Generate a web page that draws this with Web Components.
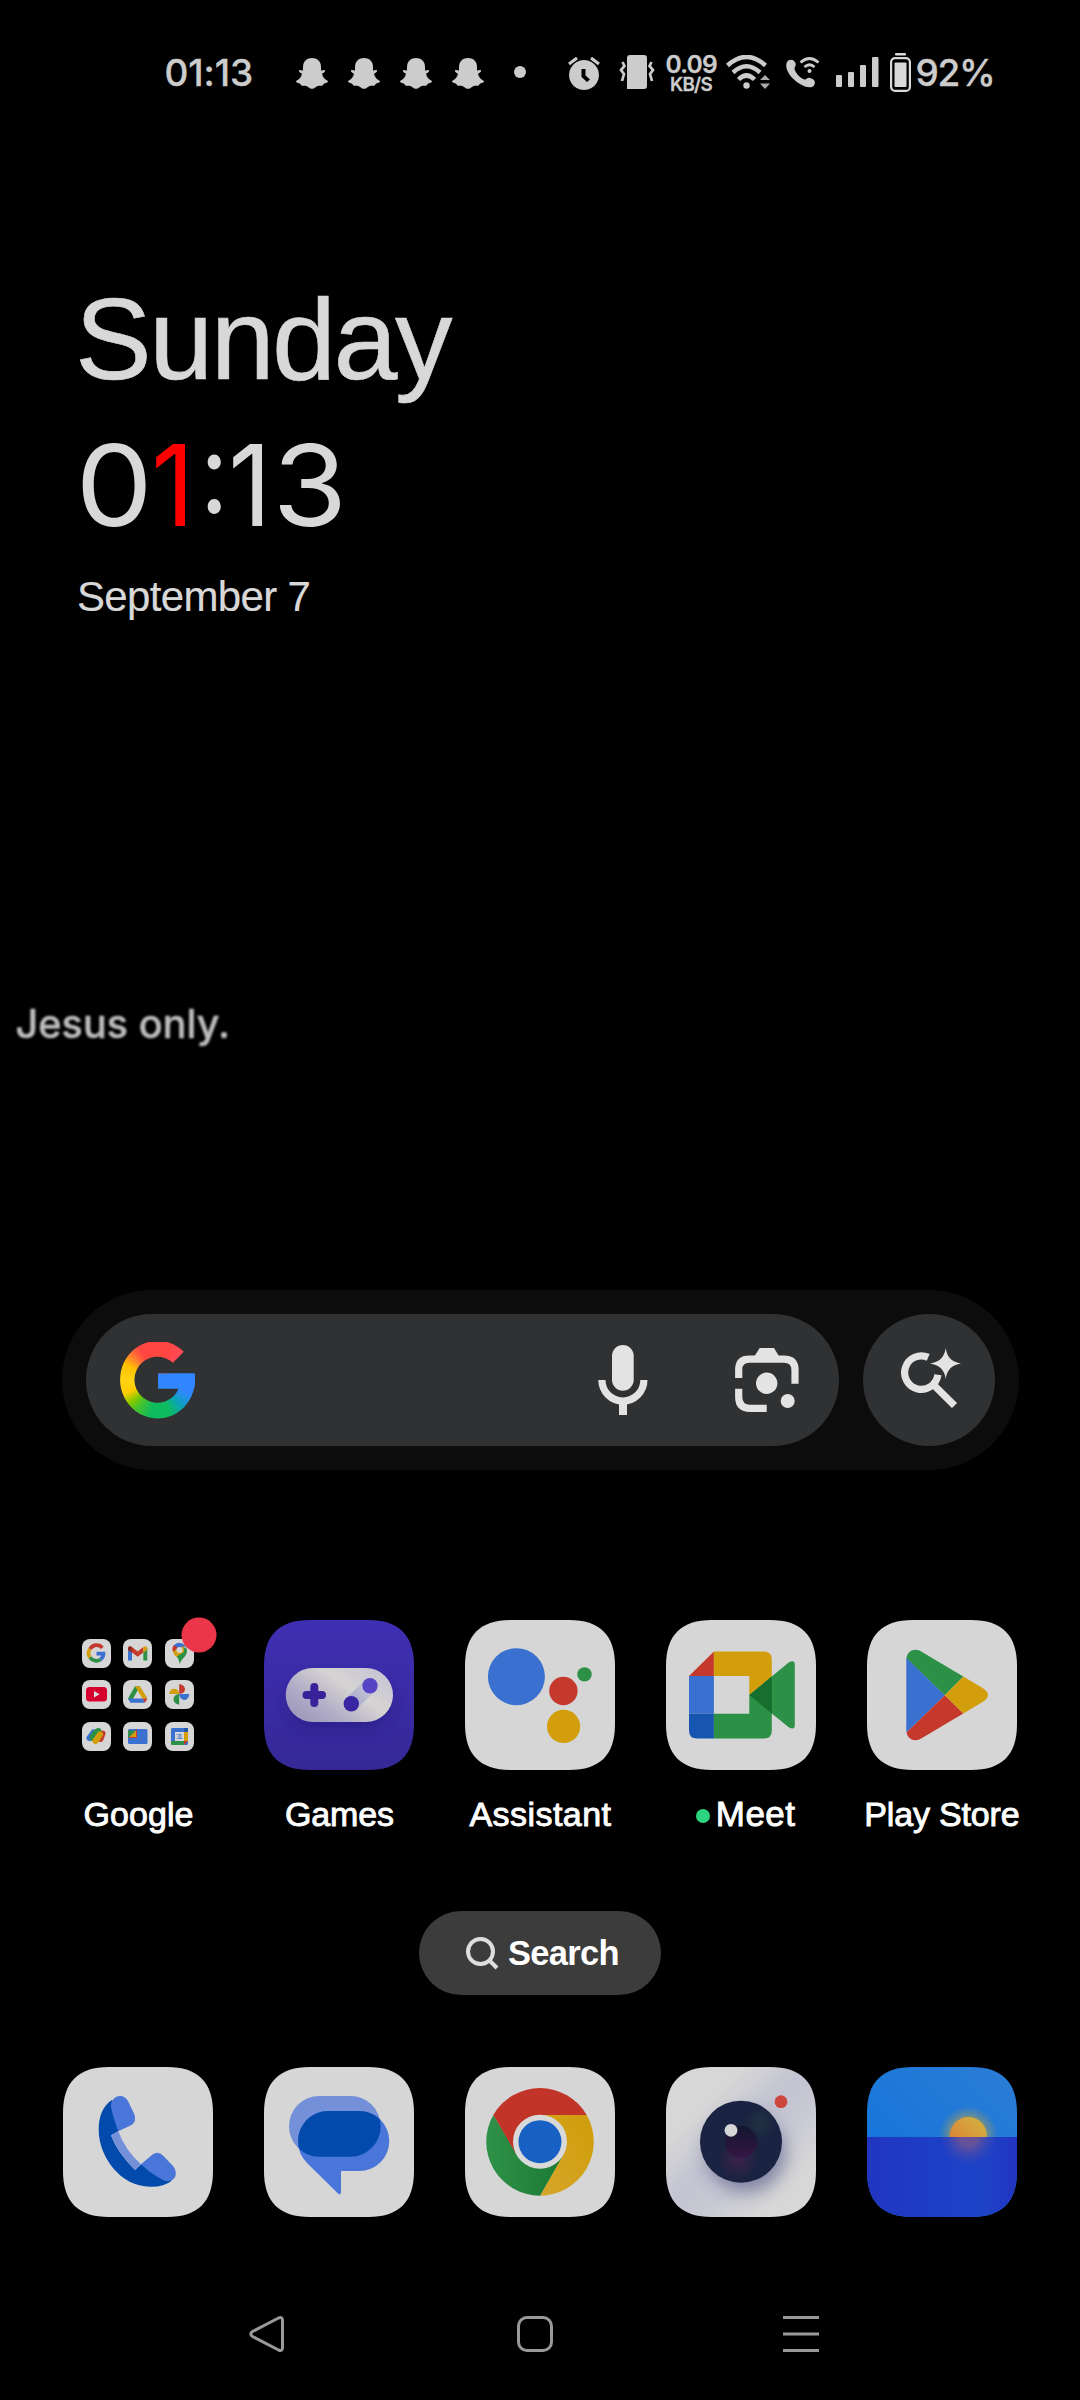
<!DOCTYPE html>
<html lang="en">
<head>
<meta charset="utf-8">
<title>Home screen</title>
<style>
html,body{margin:0;background:#000}
body{width:1080px;height:2400px;overflow:hidden}
</style>
</head>
<body>
<home-screen></home-screen>
<script>
const define=(name,html,extra)=>customElements.define(name,class extends HTMLElement{
  constructor(){super();this.attachShadow({mode:'open'}).innerHTML=html}
  connectedCallback(){if(extra)extra(this)}
});

/* Text whose box is its ink width by its cap height. */
const ctx=document.createElement('canvas').getContext('2d');
customElements.define('fit-text',class extends HTMLElement{
  connectedCallback(){
    if(this.shadowRoot)return;
    const g=(k,d)=>this.getAttribute(k)||d;
    const text=this.textContent,size=g('size'),weight=g('weight','400'),family=g('family','Liberation Sans');
    const w=+g('w'),h=+g('h');
    ctx.font=`${weight} ${size}px "${family}", sans-serif`;
    const m=ctx.measureText(text);
    const ink=m.actualBoundingBoxRight+m.actualBoundingBoxLeft;
    const ls=text.length>1?(w-ink)/(text.length-1):0;
    const scale=text.length>1?1:w/ink;
    const top=h/2-(m.fontBoundingBoxAscent-m.fontBoundingBoxDescent)/2;
    this.attachShadow({mode:'open'}).innerHTML=`<style>
      :host{display:flow-root;flex:none;width:${w}px;height:${h}px}
      span{display:block;width:max-content;white-space:pre;font:${weight} ${size}px/${h}px "${family}",sans-serif;
      letter-spacing:${ls}px;margin:${top}px 0 0 ${m.actualBoundingBoxLeft}px;
      transform:${scale===1?'none':`scaleX(${scale})`};transform-origin:${-m.actualBoundingBoxLeft}px 0;
      -webkit-text-stroke:${g('stroke','0')}px currentColor}
      </style><span><slot></slot></span>`;
  }
});

/* Status bar */
const snap=`<svg width="32" height="31" viewBox="0 0 32 31"><path d="M16 0c6 0 9 4 9 9v3.500c1.500.3 2.500-.8 3.700-.2 1.200.7-.2 2-2.700 3.400.8 3.600 3 6 6 7.200.2 1.700-2.300 2.300-4.300 2.800-.3 1.200-.8 2-2.200 2-2 0-3.500-.3-5.200 1-1.600 1.200-2.800 2.100-4.300 2.100s-2.700-.9-4.300-2.100c-1.700-1.300-3.200-1-5.200-1-1.400 0-1.900-.8-2.200-2C2.300 25.200-.2 24.600 0 22.900c3-1.200 5.200-3.600 6-7.200-2.500-1.400-3.900-2.700-2.700-3.400C4.500 11.700 5.500 12.800 7 12.500V9c0-5 3-9 9-9z"/></svg>`;
define('status-bar',`<style>
:host{display:flex;align-items:center;height:144px;padding-left:166.500px;box-sizing:border-box;color:#ccc}
svg{display:block;fill:#ccc;flex:none}
.snaps{display:flex;gap:20px;margin:3px 0 0 44px}
.dot{width:12px;height:12px;border-radius:50%;background:#ccc;margin-left:30px}
.rate{display:flex;flex-direction:column;gap:3.500px;align-items:center;margin:3px 0 0 12px}
</style>
<fit-text size="37" family="Inter" weight="500" stroke=".3" w="85.500" h="27">01:13</fit-text>
<div class="snaps">${snap.repeat(4)}</div><div class="dot"></div>
<svg style="margin:1px 0 0 42px" width="32" height="34" viewBox="0 0 32 34"><path fill-rule="evenodd" d="M16 4a15 15 0 1 0 .01 0zM13.500 13h4v6.500l4.500 4-3 2.500-5.500-5z"/><path d="M1 8L9 2M31 8L23 2" stroke="#ccc" stroke-width="3.200"/></svg>
<svg style="margin-left:18.500px" width="36" height="34" viewBox="0 0 36 34"><path d="M11 0H25a3 3 0 0 1 3 3V31a3 3 0 0 1-3 3H8V3a3 3 0 0 1 3-3z"/><path d="M3.500 7L5.500 11 2 15 5 19 3 26M32.500 7l-2 4 3.500 4-3 4 2 7" fill="none" stroke="#ccc" stroke-width="2.700"/></svg>
<div class="rate"><fit-text size="24.500" family="Inter" weight="600" stroke=".3" w="50.500" h="17.500">0.09</fit-text><fit-text size="18.800" family="Inter" weight="600" stroke=".3" w="41.500" h="13.500">KB/S</fit-text></div>
<svg style="margin-left:9px" width="45" height="34" viewBox="0 0 45 34"><circle cx="20.500" cy="30.500" r="3.200"/><path d="M1.500 10.500Q20.500-6.500 39.500 10.500M7 17.500Q20.500 5 34 17.500M12.500 24.500Q20.500 16.500 28.500 24.500" fill="none" stroke="#ccc" stroke-width="4.500"/><path d="M34 25l5-5 5 5zM34 28.500l5 5.500 5-5.500z" fill="#aaa"/></svg>
<svg style="margin-left:15px" width="34" height="31" viewBox="0 0 34 31"><path d="M1 5C3 1.500 8 2 9.500 6c1 3-1.500 4.500-1 6 1.500 4.500 5 8.500 10 10.500 2 .5 2.500-2.500 5.500-1.500 4.500 1 6 4 4 7.500-3 3.500-9 1.500-14-1.500C6.500 22.500 1.500 16.500.3 10Q0 7 1 5z"/><circle cx="23.500" cy="14" r="2"/><path d="M14.500 5.500q9-8 18 0M18.500 10q5-4.500 10 0" fill="none" stroke="#ccc" stroke-width="2.800"/></svg>
<svg style="margin-left:16px" width="43" height="30" viewBox="0 0 43 30"><rect y="18" width="6" height="12" rx="1"/><rect x="12" y="15" width="6" height="15" rx="1"/><rect x="24" y="8" width="6" height="22" rx="1"/><rect x="36" width="6.500" height="30" rx="1"/></svg>
<svg style="margin-left:10.500px" width="21" height="39" viewBox="0 0 21 39"><g fill="#dadada"><rect x="5" width="11" height="2.500" rx="1"/><rect x="1.100" y="5.100" width="18.800" height="32.800" rx="4" fill="none" stroke="#dadada" stroke-width="2.200"/><rect x="4.500" y="9.500" width="12" height="24.500" rx="1"/></g></svg>
<fit-text style="margin-left:7px" size="37" family="Inter" weight="500" stroke=".3" w="74.500" h="27">92%</fit-text>`);

/* Clock widget */
define('clock-widget',`<style>
:host{display:flex;flex-direction:column;padding:153px 0 0 78px;height:898px;box-sizing:border-box;color:#d8d8d8}
.t{display:flex;margin:65px 0 0 4px}.r{color:#f00}
</style>
<fit-text style="margin-left:2px" size="115" stroke=".6" w="373" h="82">Sunday</fit-text>
<div class="t"><fit-text size="113" family="Inter" w="64" h="82">0</fit-text><fit-text class="r" style="margin-left:10px" size="113" family="Inter" w="30" h="82">1</fit-text><fit-text style="margin-left:21px" size="113" family="Inter" w="14" h="69">:</fit-text><fit-text style="margin-left:12px" size="113" family="Inter" w="30" h="82">1</fit-text><fit-text style="margin-left:16px" size="113" family="Inter" w="62" h="82">3</fit-text></div>
<fit-text style="margin-top:56px" size="42" stroke=".2" w="231.500" h="29">September 7</fit-text>`);

define('wallpaper-caption',`<style>:host{display:flex;align-items:flex-end;height:248px;margin-top:-248px;padding:0 0 0 16.500px;color:#bcbcbc;filter:blur(1px)}
:host{margin-top:0;box-sizing:border-box;align-items:flex-start}fit-text{transform:translateY(-33px)}</style>
<fit-text size="39.500" family="Inter" weight="500" stroke=".5" w="210.500" h="29">Jesus only.</fit-text>`);

/* Search widget */
define('google-g',`<style>:host{display:block;width:78px;height:78px;margin-top:1px}
div{width:78px;height:78px;clip-path:path("M64.700 10.300L54 21.300A23 23 0 1 0 59.700 47H39V32H75.600A37.500 38.800 0 1 1 64.700 10.300Z");
background:linear-gradient(#3186ff,#3186ff) 38px 31px/40px 16px no-repeat,conic-gradient(at 39px 39px,#ff4641 15deg,#ff4a5a 42deg,#3186ff 70deg,#3186ff 112deg,#0aa5b5 138deg,#0ebc5f 160deg,#0ebc5f 192deg,#45c32c 217deg,#7ac800 230deg,#ffcc00 250deg,#ffd314 272deg,#ffc000 297deg,#ff8030 313deg,#ff4641 330deg)}</style><div></div>`);
define('search-widget',`<style>
:host{display:flex;gap:24px;margin:0 61px 0 62px;padding:24px;height:132px;background:#0c0c0c;border-radius:90px}
.bar{display:flex;align-items:center;width:753px;box-sizing:border-box;background:#303133;border-radius:66px;padding-left:33px}
.ai{display:flex;align-items:center;justify-content:center;width:132px;background:#303133;border-radius:50%}
svg{display:block;fill:#e3e3e3}.l{fill:none;stroke:#e3e3e3;stroke-width:7.200}
</style><div class="bar"><google-g></google-g>
<svg style="margin-left:401px" width="50" height="70" viewBox="0 0 50 70"><rect x="14" width="21.700" height="45.700" rx="10.850"/><path class="l" d="M3.900 35A21 21 0 0 0 45.900 35"/><rect x="21" y="59" width="8" height="11"/></svg>
<svg style="margin-left:87px" width="64" height="64" viewBox="0 0 64 64"><path class="l" d="M3.700 30V21.500Q3.700 11.200 14.500 11.200H49Q60 11.200 60 22V35.700M3.700 40.700V49Q3.700 60.300 15 60.300H31.700"/><path d="M19 9L24.700 0H39L44.500 9z"/><circle cx="31.700" cy="35.300" r="10.700"/><circle cx="52.700" cy="53" r="7"/></svg>
</div><div class="ai"><svg style="margin:-4px 0 0 4px" width="60" height="60" viewBox="0 0 60 60"><path class="l" d="M27.200 9.400A16.700 16.700 0 1 0 36.900 26.800M32.500 36.700L53.500 57.500"/><path d="M44.700 0Q46.500 13.700 60 15.500 46.500 17.300 44.700 31 42.900 17.300 29 15.500 42.900 13.700 44.700 0z"/></svg></div>`);

/* App icons, each on a 150-unit tile */
const tile='M0 46C0 15 15 0 46 0H104C135 0 150 15 150 46V104C150 135 135 150 104 150H46C15 150 0 135 0 104Z';
const B='#3a70cf',R='#c5392d',G='#2d9047',Y='#d29e0b';
const mini=(x,y,s)=>`<g transform="translate(${x} ${y})"><rect width="29" height="29" rx="8" fill="#d6d6d6"/>${s}</g>`;
const art={
google:mini(19,19,`<g fill="none" stroke-width="3.700"><path stroke="${R}" d="M20.300 8.800A7.400 7.400 0 0 0 8 10"/><path stroke="${Y}" d="M8 10A7.400 7.400 0 0 0 8 18.500"/><path stroke="${G}" d="M8 18.500A7.400 7.400 0 0 0 18.500 20.400"/><path stroke="${B}" d="M18.500 20.400A7.400 7.400 0 0 0 21.500 14.700H14.500"/></g>`)
+mini(60,19,`<path fill="${B}" d="M5 9V21.500H9V12z"/><path fill="${G}" d="M24.300 9V21.500H20.300V12z"/><path fill="${R}" d="M5 10Q5 6 9 8L14.700 12.500 20.300 8V13.500L14.700 17.700 9 13.500 5 11z"/><path fill="#8f2922" d="M5 10Q5 6 9 8V13.500L5 11z"/><path fill="${Y}" d="M20.300 8Q24.300 6 24.300 10V11L20.300 13.700z"/>`)
+mini(102,19,`<path fill="${G}" d="M14.500 25Q14 19 10 16L21 8Q24 14 18 19.500 15.500 22 14.500 25z"/><path fill="${B}" d="M9 6Q15 1 20.500 7L14.500 14 9 9z"/><path fill="${R}" d="M9 6L13 9 8.500 13.500Q6 9.500 9 6z"/><path fill="${Y}" d="M8 12.500L18.500 7 19 13 11 18Q8.500 15.500 8 12.500z"/><circle cx="14.500" cy="11" r="3" fill="#d6d6d6"/>`)
+mini(19,60,`<rect x="4" y="7" width="21" height="14.500" rx="3.500" fill="#d5002d"/><path fill="#ddd" d="M12 11V17.500L17.500 14.200z"/>`)
+mini(60,60,`<path fill="${G}" d="M12 6.300H17L9.500 19.500 7.500 22.500 5 18.500z"/><path fill="${Y}" d="M12 6.300H17L24.500 18.500H19.500z"/><path fill="${B}" d="M5 18.500H19.500L22 22.700H7.500z"/><path fill="${R}" d="M19.500 18.500H24.500L22 22.700z"/>`)
+mini(102,60,`<path fill="${R}" d="M14.200 4Q20 5 20 9.500 19.500 13.500 14.200 14z"/><path fill="${B}" d="M24.300 14Q23.500 20 19 20 14.500 19 14.200 14z"/><path fill="${G}" d="M14.200 24.700Q8.500 23.500 8.500 19 9 14.500 14.200 14z"/><path fill="${Y}" d="M4 14Q5 8.800 9.500 8.800 14 9.500 14.200 14z"/>`)
+mini(19,102,`<g fill="none" stroke-linecap="round" stroke-width="6"><path stroke="${R}" d="M20.500 11.500L18.500 17"/><path stroke="${B}" d="M11.500 10.500L7.500 16"/><path stroke="${G}" d="M16.500 9Q13 10 10.500 16"/><path stroke="${Y}" d="M18 12.500L13.500 19"/></g>`)
+mini(60,102,`<rect x="5" y="7" width="19.500" height="15" rx="1.500" fill="${B}"/><path fill="${R}" d="M14 7V16H5z"/><path fill="${G}" d="M5 8.500H13L5 16z"/><path fill="${Y}" d="M13 8.500V15H6.500z"/>`)
+mini(102,102,`<rect x="6" y="6" width="17" height="17" rx="1.500" fill="${B}"/><path fill="#2358aa" d="M19 6H23V10H19z"/><path fill="${Y}" d="M19 10H23V19H19z"/><path fill="${G}" d="M6 19H19V23H7.500Q6 23 6 21.500z"/><path fill="${R}" d="M19 19H23L19 23z"/><rect x="10" y="10" width="9" height="9" fill="#d6d6d6"/><text x="14.500" y="17.300" text-anchor="middle" font-family="Liberation Sans" font-size="8" textLength="7" fill="${B}">31</text>`)
+`<circle cx="136" cy="15" r="17.500" fill="#eb3549"/>`,
games:`<defs><linearGradient id="a" x2="0" y2="1"><stop stop-color="#3f2fb3"/><stop offset="1" stop-color="#352896"/></linearGradient><linearGradient id="b" x1="0" y1="1" x2="1" y2=".3"><stop offset=".05" stop-color="#9a94b8"/><stop offset=".35" stop-color="#b0abc6"/><stop offset=".7" stop-color="#d6d4d2"/><stop offset="1" stop-color="#c9c6d4"/></linearGradient><linearGradient id="d" x1="0" y1="1" x2="1" y2="0"><stop stop-color="#a9a8cc"/><stop offset="1" stop-color="#c5c8d4"/></linearGradient><filter id="c" x="-30%" y="-50%" width="160%" height="200%"><feGaussianBlur stdDeviation="8"/></filter></defs><path d="${tile}" fill="url(#a)"/><rect x="24" y="60" width="102" height="48" rx="24" fill="#24167c" opacity=".55" filter="url(#c)"/><rect x="21.700" y="48" width="107.300" height="54" rx="27" fill="url(#b)"/><path d="M42.500 75H58M50.300 67V83" stroke="#37229a" stroke-width="8" stroke-linecap="round"/><path d="M87.300 83.700L106 65.700" stroke="url(#d)" stroke-width="15"/><circle cx="87.300" cy="83.700" r="7.700" fill="#3826a2"/><circle cx="106" cy="65.700" r="7.700" fill="#5745c6"/>`,
assistant:`<path d="${tile}" fill="#d6d6d6"/><circle cx="51.400" cy="56.700" r="28.500" fill="${B}"/><circle cx="98.400" cy="71" r="14.200" fill="${R}"/><circle cx="119.500" cy="54.400" r="7.200" fill="${G}"/><circle cx="98.600" cy="106.400" r="16.600" fill="${Y}"/>`,
meet:`<path d="${tile}" fill="#d6d6d6"/><path fill="${R}" d="M47.900 31.400V56H23z"/><path fill="${Y}" d="M47.900 31.400H98Q105.800 31.400 105.800 39.500V57.300L83.300 75V56H47.900z"/><path fill="${B}" d="M23 56H47.900V93.800H23z"/><path fill="#1655b0" d="M23 93.800H47.900V118.600H31Q23 118.600 23 110.500z"/><path fill="${G}" d="M47.900 93.800H83.300V75L123 42.300Q128.800 39.500 128.800 45V105Q128.800 110.500 123 107.500L105.800 93.500V110.500Q105.800 118.600 98 118.600H47.900z"/><path fill="#166f2e" d="M83.300 75L105.800 56.500V93.500z"/>`,
play:`<defs><clipPath id="a"><path d="M39.300 40C39.300 31 47.500 27 55 32L114 67Q121 71 121 75T114 83L55 118C47.500 123 39.300 119 39.300 110z"/></clipPath></defs><path d="${tile}" fill="#d6d6d6"/><g clip-path="url(#a)"><path fill="${B}" d="M39 37L77.800 75.300 39 113z"/><path fill="${G}" d="M39 20V37.500L77.800 75.300 96.900 56 110 20z"/><path fill="${R}" d="M39 130V113L77.800 75.300 96.900 94 110 130z"/><path fill="${Y}" d="M77.800 75.300L96.900 56 110 50 130 75 110 100 96.900 94z"/></g>`,
phone:`<path d="${tile}" fill="#d6d6d6"/><path fill="#024bad" d="M48.700 33C39 40 35.700 50 35.700 63C35.700 90 58 119.700 87 119.700Q101 120 108.700 113.700L101 101 78 97.300 72 103Q54 85 48 68.300L55.300 64.300 53 45z"/><path fill="#4b76d9" d="M48 37C49 32 53 29 57 29Q62 29 65 34L71.500 47.500Q73.500 55 68.500 58L55.300 64.300Q50 50 48 40zM78 97.300L89.500 87.500Q95 83.500 100 88.500L110 99Q114 104 112.300 109.500C110.500 114 105 115 101 113.500Q88 107 78 97.300z"/><path fill="#7490d9" d="M48 68.300L55.300 64.300Q62 83 78 97.300L72 103Q55 86 48 68.300z"/>`,
messages:`<defs><clipPath id="a"><rect x="25" y="29" width="91.700" height="60.700" rx="30.300"/></clipPath></defs><path d="${tile}" fill="#d6d6d6"/><rect x="25" y="29" width="91.700" height="60.700" rx="30.300" fill="#7490d9"/><path fill="#4b76d9" d="M64 44H95.300A30 30 0 0 1 95.300 104H77V125.500Q77 128 74.500 127L43 96Q34 87 34 74A30 30 0 0 1 64 44z"/><rect x="34" y="44" width="91.300" height="60" rx="30" fill="#024bad" clip-path="url(#a)"/>`,
chrome:`<defs><linearGradient id="g"><stop stop-color="#2f9148"/><stop offset="1" stop-color="#1c7a33"/></linearGradient><linearGradient id="y" x1="1" y1="0" x2="0" y2="1"><stop stop-color="#cf9d08"/><stop offset="1" stop-color="#d6a62b"/></linearGradient></defs><path d="${tile}" fill="#d6d6d6"/><path fill="#c23328" d="M28.300 48A54 54 0 0 1 121.700 48H75L51 88z"/><path fill="url(#y)" d="M121.700 48A54 54 0 0 1 75 128.700L98 88 75 48z"/><path fill="url(#g)" d="M28.300 48A54 54 0 0 0 75 128.700L98.300 88 75 100 51.700 88z"/><circle cx="75" cy="74.700" r="27" fill="#d9d9d9"/><circle cx="75" cy="74.700" r="21.500" fill="#1860c4"/>`,
camera:`<defs><clipPath id="t"><path d="${tile}"/></clipPath><linearGradient id="a" x2="1" y2="1"><stop offset=".25" stop-color="#d7d7d7"/><stop offset=".47" stop-color="#c3c3d2"/><stop offset=".62" stop-color="#c9c9d4"/><stop offset=".8" stop-color="#d7d7d7"/></linearGradient><filter id="f" x="-50%" y="-50%" width="200%" height="200%"><feGaussianBlur stdDeviation="9"/></filter><radialGradient id="p"><stop stop-color="#4a2350"/><stop offset="1" stop-color="#4a2350" stop-opacity="0"/></radialGradient><radialGradient id="q"><stop stop-color="#263a40"/><stop offset="1" stop-color="#263a40" stop-opacity="0"/></radialGradient><linearGradient id="i" x2="0" y2="1"><stop stop-color="#12152f"/><stop offset="1" stop-color="#351644"/></linearGradient></defs><g clip-path="url(#t)"><rect width="150" height="150" fill="url(#a)"/><circle cx="80" cy="86" r="39" fill="#555a85" opacity=".65" filter="url(#f)"/></g><circle cx="75" cy="74.700" r="41" fill="#1a2341"/><circle cx="94" cy="56" r="16" fill="url(#q)" opacity=".7"/><circle cx="72" cy="92" r="21" fill="url(#p)" opacity=".7"/><circle cx="75" cy="75" r="16" fill="url(#i)"/><circle cx="65" cy="63.300" r="6.400" fill="#d6d6d6"/><circle cx="115" cy="34.700" r="6.400" fill="#cc463c"/>`,
weather:`<defs><clipPath id="t"><path d="${tile}"/></clipPath><clipPath id="h"><rect y="70" width="150" height="80"/></clipPath><linearGradient id="s" x1="0" y1="1" x2="1" y2="0"><stop stop-color="#0f73dc"/><stop offset="1" stop-color="#2c7dd5"/></linearGradient><linearGradient id="w"><stop stop-color="#2135c0"/><stop offset=".5" stop-color="#1c3fc6"/><stop offset=".8" stop-color="#1d42c6"/><stop offset="1" stop-color="#2233c0"/></linearGradient><radialGradient id="o"><stop offset=".55" stop-color="#9c9c62" stop-opacity=".8"/><stop offset="1" stop-color="#6c8c90" stop-opacity="0"/></radialGradient><radialGradient id="r"><stop offset=".3" stop-color="#66529a"/><stop offset="1" stop-color="#3e46b4" stop-opacity="0"/></radialGradient><linearGradient id="u" x1="0" y1="1" x2="1" y2="0"><stop offset=".3" stop-color="#d98a38"/><stop offset="1" stop-color="#d3b640"/></linearGradient></defs><g clip-path="url(#t)"><rect width="150" height="150" fill="url(#s)"/><circle cx="101.300" cy="68.500" r="30" fill="url(#o)"/><circle cx="101.300" cy="68.500" r="18.500" fill="url(#u)"/><rect y="70" width="150" height="80" fill="url(#w)"/><circle cx="101.300" cy="70" r="29" fill="url(#r)" clip-path="url(#h)"/></g>`
};
define('app-icon',`<style>:host{display:flex;flex-direction:column;align-items:center;width:150px;color:#fff}
svg{display:block;width:150px;height:150px;overflow:visible}
.label{display:flex;align-items:center;justify-content:center;white-space:nowrap;margin:32px 0 0 1px;height:24px}
::slotted(i){width:14px;height:14px;border-radius:50%;background:#2dd47f;margin:4px 8px 0 8px}</style>
<div id="art"></div><div class="label"><slot></slot></div>`,
el=>{el.shadowRoot.getElementById('art').innerHTML=`<svg viewBox="0 0 150 150">${art[el.getAttribute('name')]}</svg>`});

define('app-row',`<style>:host{display:flex;gap:51px;padding-left:63px;align-items:flex-start;height:206px}</style><slot></slot>`);
define('search-pill',`<style>:host{display:flex;align-items:center;width:242px;height:84px;margin:85px 0 72px 419px;border-radius:42px;background:#3c3c3c;color:#fff}
svg{margin-left:47px;display:block}fit-text{margin:0 0 0 10px}</style>
<svg width="33" height="33" viewBox="0 0 33 33" fill="none" stroke="#dedede" stroke-width="4"><circle cx="14.500" cy="14.500" r="12.500"/><path d="M23 23L31 31"/></svg>
<fit-text size="34.500" weight="700" w="108.500" h="24">Search</fit-text>`);
define('nav-bar',`<style>:host{display:flex;padding:43px 0 0 249px}svg{display:block;fill:none;stroke:#999;stroke-width:3}</style>
<svg width="36" height="36" viewBox="0 0 36 36"><path d="M29.500 2Q33.500.3 33.500 4.500V31.500Q33.500 35.700 29.500 34L3.500 20.500Q0 18 3.500 15.500z"/></svg>
<svg style="margin-left:232px" width="36" height="36" viewBox="0 0 36 36"><rect x="1.500" y="1.500" width="33" height="33" rx="8.500"/></svg>
<svg style="margin-left:230px" width="36" height="36" viewBox="0 0 36 36"><path d="M0 1.500H36M0 18H36M0 34.500H36"/></svg>`);

define('home-screen',`<style>:host{display:flex;flex-direction:column;width:1080px;height:2400px;background:#000;overflow:hidden}
status-bar,clock-widget,wallpaper-caption,search-widget,app-row,search-pill,nav-bar{flex:none}
app-row.apps{margin-top:150px}</style>
<status-bar></status-bar><clock-widget></clock-widget><wallpaper-caption></wallpaper-caption><search-widget></search-widget>
<app-row class="apps">
<app-icon name="google"><fit-text size="34" stroke=".9" w="108" h="24">Google</fit-text></app-icon>
<app-icon name="games"><fit-text size="34" stroke=".9" w="107" h="24">Games</fit-text></app-icon>
<app-icon name="assistant"><fit-text size="34" stroke=".9" w="142" h="24">Assistant</fit-text></app-icon>
<app-icon name="meet"><i></i><fit-text size="35" stroke=".9" w="77.500" h="24">Meet</fit-text></app-icon>
<app-icon name="play"><fit-text size="34" stroke=".9" w="152.500" h="24">Play Store</fit-text></app-icon>
</app-row>
<search-pill></search-pill>
<app-row><app-icon name="phone"></app-icon><app-icon name="messages"></app-icon><app-icon name="chrome"></app-icon><app-icon name="camera"></app-icon><app-icon name="weather"></app-icon></app-row>
<nav-bar></nav-bar>`);
</script>
</body>
</html>
